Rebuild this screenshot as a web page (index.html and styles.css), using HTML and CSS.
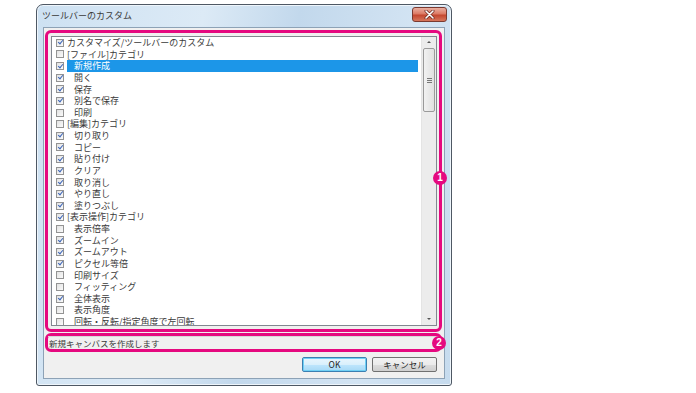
FILE: index.html
```html
<!DOCTYPE html>
<html lang="ja">
<head>
  <meta charset="UTF-8" />
  <meta name="viewport" content="width=device-width, initial-scale=1.0" />
  <title>ツールバーのカスタム</title>
  <link rel="stylesheet" href="styles.css">
</head>
<body>
  <div class="window">
    <div class="titlebar">
      <span class="title">ツールバーのカスタム</span>
      <span class="close">
        <svg width="11" height="9" viewBox="0 0 11 9">
          <path d="M2 1 L9 8 M9 1 L2 8" stroke="#6b2a20" stroke-width="3" stroke-linecap="round" />
          <path d="M2 1 L9 8 M9 1 L2 8" stroke="#fff" stroke-width="1.6" stroke-linecap="round" />
        </svg>
      </span>
    </div>

    <div class="client">
      <div class="mark list-mark">
        <div class="listbox">
          <ul class="items">
            <li class="row"><span class="box on"></span><span class="label">カスタマイズ/ツールバーのカスタム</span></li>
            <li class="row"><span class="box"></span><span class="label">[ファイル]カテゴリ</span></li>
            <li class="row sub selected"><span class="box on"></span><span class="label">新規作成</span></li>
            <li class="row sub"><span class="box on"></span><span class="label">開く</span></li>
            <li class="row sub"><span class="box on"></span><span class="label">保存</span></li>
            <li class="row sub"><span class="box on"></span><span class="label">別名で保存</span></li>
            <li class="row sub"><span class="box"></span><span class="label">印刷</span></li>
            <li class="row"><span class="box"></span><span class="label">[編集]カテゴリ</span></li>
            <li class="row sub"><span class="box on"></span><span class="label">切り取り</span></li>
            <li class="row sub"><span class="box on"></span><span class="label">コピー</span></li>
            <li class="row sub"><span class="box on"></span><span class="label">貼り付け</span></li>
            <li class="row sub"><span class="box on"></span><span class="label">クリア</span></li>
            <li class="row sub"><span class="box on"></span><span class="label">取り消し</span></li>
            <li class="row sub"><span class="box on"></span><span class="label">やり直し</span></li>
            <li class="row sub"><span class="box on"></span><span class="label">塗りつぶし</span></li>
            <li class="row"><span class="box on"></span><span class="label">[表示操作]カテゴリ</span></li>
            <li class="row sub"><span class="box"></span><span class="label">表示倍率</span></li>
            <li class="row sub"><span class="box on"></span><span class="label">ズームイン</span></li>
            <li class="row sub"><span class="box on"></span><span class="label">ズームアウト</span></li>
            <li class="row sub"><span class="box on"></span><span class="label">ピクセル等倍</span></li>
            <li class="row sub"><span class="box"></span><span class="label">印刷サイズ</span></li>
            <li class="row sub"><span class="box"></span><span class="label">フィッティング</span></li>
            <li class="row sub"><span class="box on"></span><span class="label">全体表示</span></li>
            <li class="row sub"><span class="box"></span><span class="label">表示角度</span></li>
            <li class="row sub"><span class="box"></span><span class="label">回転・反転/指定角度で左回転</span></li>
          </ul>
          <div class="scrollbar">
            <div class="arrow up"></div>
            <div class="thumb"><span class="grip"></span></div>
            <div class="track"></div>
            <div class="arrow down"></div>
          </div>
        </div>
      </div>

      <div class="mark status-mark">
        <div class="status">新規キャンバスを作成します</div>
      </div>

      <div class="buttons">
        <button class="btn default">OK</button>
        <button class="btn">キャンセル</button>
      </div>
    </div>

    <span class="badge b1">1</span>
    <span class="badge b2">2</span>
  </div>
</body>
</html>
```

FILE: styles.css
```css
body {
  margin: 0;
  padding: 4px 0 0 36px;
  background: #fff;
  font-family: "Noto Sans CJK JP", "Noto Sans", sans-serif;
  color: #333;
}
.window {
  position: relative;
  box-sizing: border-box;
  width: 416px;
  height: 382px;
  padding: 0 6px 6px 6px;
  border: 1px solid #4e5864;
  border-radius: 7px 7px 3px 3px;
  background: linear-gradient(100deg, #cde1f2 0%, #dceaf6 35%, #c2d8ec 55%, #d3e4f3 80%, #c6dbee 100%);
  box-shadow: inset 0 0 0 1px #eef5fb;
}
.titlebar {
  height: 22px;
  display: flex;
  align-items: flex-start;
  justify-content: space-between;
}
.title {
  margin: 5px 0 0 -1px;
  font-size: 9px;
  line-height: 12px;
  color: #3a3a3a;
}
.close {
  margin: 2px -2px 0 0;
  width: 33px;
  height: 13px;
  border: 1px solid #7a3a30;
  border-radius: 3px;
  background: linear-gradient(#eab0a2 0%, #dc7a64 45%, #c4472f 55%, #d6765c 100%);
  display: flex;
  align-items: center;
  justify-content: center;
}
.client {
  box-sizing: border-box;
  height: 352px;
  border: 1px solid #8da2b6;
  background: #f0f0f0;
  padding: 1px 2px 0 1px;
}
.mark {
  border: 3px solid #e5097f;
  border-radius: 6px;
  background: #f0f0f0;
}
.list-mark {
  height: 302px;
  box-sizing: border-box;
  margin-top: 1px;
  padding: 3px 2px 3px 3px;
}
.listbox {
  box-sizing: border-box;
  height: 290px;
  display: flex;
  border: 1px solid #828790;
  background: #fff;
  overflow: hidden;
}
.items {
  flex: 1;
  list-style: none;
  margin: 0;
  padding: 0;
  overflow: hidden;
}
.row {
  display: flex;
  align-items: center;
  height: 11.625px;
  font-size: 9px;
  color: #3a3a3a;
  white-space: nowrap;
}
.box {
  position: relative;
  flex: none;
  box-sizing: border-box;
  width: 8px;
  height: 8px;
  margin-left: 4px;
  border: 1px solid #939393;
  background: linear-gradient(135deg, #e2e2e2, #fafafa);
}
.box.on::after {
  content: "";
  position: absolute;
  left: 1.5px;
  top: -0.5px;
  width: 2px;
  height: 4px;
  border: solid #3a64b8;
  border-width: 0 1.5px 1.5px 0;
  transform: rotate(40deg);
}
.label {
  flex: 1;
  margin: 0 3px 0 3px;
  height: 11.625px;
  line-height: 11.625px;
}
.sub .label {
  padding-left: 7px;
}
.selected .label {
  background: #1c96e8;
  color: #fff;
}
.scrollbar {
  width: 14px;
  flex: none;
  display: flex;
  flex-direction: column;
  background: #ececec;
  border-left: 1px solid #e4e4e4;
}
.arrow {
  height: 11px;
  position: relative;
}
.arrow::after {
  content: "";
  position: absolute;
  left: 5px;
  top: 4px;
  border-left: 2px solid transparent;
  border-right: 2px solid transparent;
}
.up::after {
  border-bottom: 2px solid #555;
}
.down::after {
  border-top: 2px solid #555;
}
.thumb {
  height: 64px;
  margin: 0 1px;
  box-sizing: border-box;
  border: 1px solid #9a9a9a;
  border-radius: 2px;
  background: linear-gradient(90deg, #f2f2f2, #e0e0e0);
  display: flex;
  align-items: center;
  justify-content: center;
}
.grip {
  width: 5px;
  height: 5px;
  background: repeating-linear-gradient(#777 0 1px, transparent 1px 2px);
}
.track {
  flex: 1;
}
.status-mark {
  margin-top: 1px;
  height: 19px;
  box-sizing: border-box;
}
.status {
  height: 13px;
  padding-left: 1px;
  font-size: 8.5px;
  line-height: 13px;
  color: #3a3a3a;
  border-top: 1px solid #d8d8d8;
  box-sizing: border-box;
}
.buttons {
  display: flex;
  justify-content: flex-end;
  gap: 5px;
  margin-top: 5px;
  padding-right: 5px;
}
.btn {
  width: 65px;
  height: 15px;
  padding: 0;
  font-family: inherit;
  font-size: 8.5px;
  line-height: 13px;
  color: #222;
  border: 1px solid #707070;
  border-radius: 2px;
  background: linear-gradient(#f2f2f2 0%, #ebebeb 50%, #dddddd 51%, #cfcfcf 100%);
}
.btn.default {
  border-color: #3c7fb1;
  box-shadow: inset 0 0 0 1px #6fd0f5;
  background: linear-gradient(#eaf6fd 0%, #d9f0fc 50%, #bee6fd 51%, #a7d9f5 100%);
}
.badge {
  position: absolute;
  width: 14px;
  height: 14px;
  border-radius: 50%;
  background: #e5097f;
  color: #fff;
  font-family: "Liberation Sans", sans-serif;
  font-weight: bold;
  font-size: 10px;
  line-height: 14px;
  text-align: center;
}
.b1 {
  left: 396px;
  top: 166px;
}
.b2 {
  left: 395px;
  top: 331px;
}
```
